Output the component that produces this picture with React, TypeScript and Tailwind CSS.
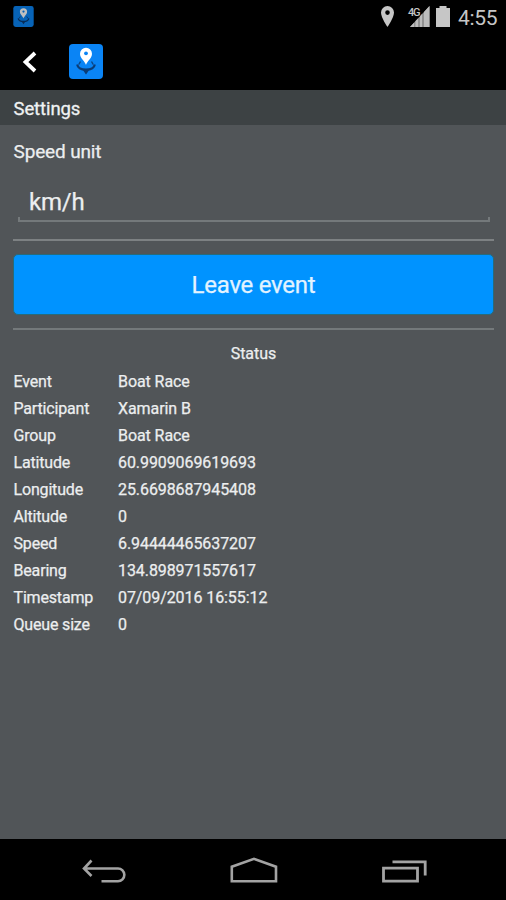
const status = [
  { label: 'Event', value: 'Boat Race' },
  { label: 'Participant', value: 'Xamarin B' },
  { label: 'Group', value: 'Boat Race' },
  { label: 'Latitude', value: '60.9909069619693' },
  { label: 'Longitude', value: '25.6698687945408' },
  { label: 'Altitude', value: '0' },
  { label: 'Speed', value: '6.94444465637207' },
  { label: 'Bearing', value: '134.898971557617' },
  { label: 'Timestamp', value: '07/09/2016 16:55:12' },
  { label: 'Queue size', value: '0' },
]

function AppIcon({ className }: { className?: string }) {
  return (
    <svg viewBox="0 0 34 35" className={className}>
      <rect width="34" height="35" rx="4" fill="#0a84f5" />
      <path d="M11.500 17.500l-1.700 3M22.500 17.500l1.700 3" stroke="#0b4585" strokeWidth="1.400" />
      <path d="M8.200 20.500c.6 3.300 4 5.200 8.800 5.200s8.200-1.900 8.800-5.200" fill="none" stroke="#0b3c76" strokeWidth="2.200" />
      <path d="M13.500 25.500h7L17 30.500z" fill="#0b3c76" />
      <path d="M17 21c-.8-3.600-6-6.700-6-11.300a6 6 0 0 1 12 0C23 14.300 17.800 17.400 17 21z" fill="#fff" />
      <circle cx="17" cy="9.300" r="1.900" fill="#0a84f5" />
    </svg>
  )
}

function StatusBar() {
  return (
    <div className="flex h-[33px] items-center pl-[13px] pr-2 text-[#c6c6c6]">
      <AppIcon className="h-[21px] w-[21px] opacity-75" />
      <svg viewBox="0 0 13 21" className="ml-auto h-[21px] w-[13px]" fill="currentColor">
        <path fillRule="evenodd" d="M6.500 0A6.500 6.500 0 0 0 0 6.500C0 11.500 6.500 21 6.500 21S13 11.500 13 6.500A6.500 6.500 0 0 0 6.500 0zm0 4.300a2.300 2.300 0 1 1 0 4.600 2.300 2.300 0 0 1 0-4.600z" />
      </svg>
      <div className="relative ml-3 h-[21px] w-[24px]">
        <svg viewBox="0 0 24 21" className="h-full w-full">
          <path d="M23.500 0v21H4z" fill="#929292" />
          <path d="M4 21l4-4.300V21zM9.500 15v6h2.500v-8.600zM14 10.200V21h2V8zM18 6v15h5.500V0z" fill="#bdbdbd" />
        </svg>
        <span className="absolute left-[2px] top-px text-[11px] font-medium leading-[11px] tracking-[-1.200px]">4G</span>
      </div>
      <svg viewBox="0 0 14 21" className="ml-[6px] h-[21px] w-[14px]" fill="currentColor">
        <path d="M3.500 0h7v2H14v19H0V2h3.500z" />
      </svg>
      <span className="ml-2 w-[40px] pt-[3px] text-[21px] leading-[33px] tracking-[-0.3px]">4:55</span>
    </div>
  )
}

function ActionBar() {
  return (
    <div className="flex h-[57px] items-center pl-[22px]">
      <svg viewBox="0 0 15 22" className="h-[22px] w-[15px]" fill="none" stroke="#fff" strokeWidth="3.800">
        <path d="M13 2L3.500 11 13 20" />
      </svg>
      <AppIcon className="ml-8 h-[35px] w-[34px]" />
    </div>
  )
}

function NavBar() {
  return (
    <div className="flex h-[61px] items-start bg-black pl-[82px] pt-[18px]">
      <svg viewBox="0 0 44 28" className="h-7 w-11" fill="none" stroke="#a3a3a3" strokeWidth="2.600">
        <path d="M9.500 3.500L2 11.500l7.500 7.500M2 11.500h34a6.300 6.300 0 0 1 0 12.700H19.500" />
      </svg>
      <svg viewBox="0 0 49 28" className="ml-[103px] h-7 w-[49px]" fill="none" stroke="#a3a3a3" strokeWidth="2.600">
        <path d="M2.800 24.200V9.700L25 1.800l22 7.900v14.500z" />
      </svg>
      <svg viewBox="0 0 46 28" className="ml-[103px] h-7 w-[46px]" fill="none" stroke="#a3a3a3" strokeWidth="2.800">
        <path d="M2.500 11.200h34v13h-34zM11.500 4.900h32.700v13.600" />
      </svg>
    </div>
  )
}

export default function App() {
  return (
    <div className="flex h-[900px] w-[506px] flex-col overflow-hidden bg-[#515558] font-['Roboto',sans-serif] text-white">
      <header className="bg-black">
        <StatusBar />
        <ActionBar />
      </header>

      <h1 className="h-[35px] bg-[#3d4244] pl-[13.500px] text-[18.500px] leading-[38px] tracking-[-0.1px] text-[#f0f2f3] [-webkit-text-stroke:0.3px_currentColor]">
        Settings
      </h1>

      <main className="flex-1 pl-[13px] pr-3 text-[#eceeef] [-webkit-text-stroke:0.25px_currentColor]">
        <div className="pl-[0.500px] pt-[13px] text-[19px] leading-[28px] tracking-[-0.150px]">Speed unit</div>

        <div className="ml-[5px] mr-1 mt-[15px] flex h-[41px] flex-col">
          <div className="h-[36px] pl-[11px] text-[24px] leading-[42px] tracking-[-0.2px]">km/h</div>
          <div className="h-[5px] border-x-2 border-b-2 border-[#74797b]" />
        </div>

        <div className="mt-[17px] h-[2px] bg-[#7d8183]" />

        <button className="mt-[13px] block h-[61px] w-full rounded-[5px] border border-[#276b7b] bg-[#0093ff] text-[24px] leading-[60px] tracking-[-0.250px] text-[#e3f3ff]">
          Leave event
        </button>

        <div className="mt-[13px] h-[2px] bg-[#74797b]" />

        <h2 className="mt-[10px] text-center text-[16px] leading-[27px]">Status</h2>

        <dl className="mt-px grid grid-cols-[105px_1fr] text-[16px] leading-[27.050px] tracking-[-0.080px]">
          {status.map(({ label, value }) => (
            <div key={label} className="contents">
              <dt className="pl-[0.500px] tracking-[-0.170px]">{label}</dt>
              <dd>{value}</dd>
            </div>
          ))}
        </dl>
      </main>

      <NavBar />
    </div>
  )
}
